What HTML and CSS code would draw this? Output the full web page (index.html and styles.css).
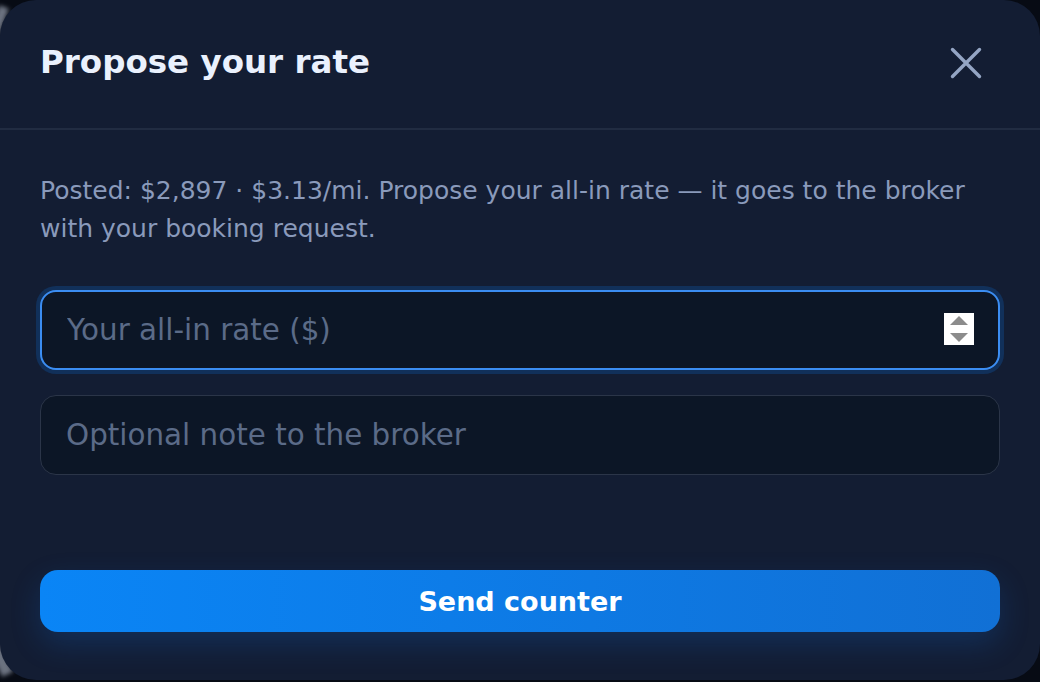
FILE: index.html
```html
<!DOCTYPE html>
<html lang="en">

<head>
    <meta charset="utf-8">
    <meta name="viewport" content="width=device-width, initial-scale=1.0">
    <title>Propose your rate</title>
    <link rel="stylesheet" href="styles.css">
</head>

<body>
    <div class="backdrop">
        <span class="blob blobTop"></span>
        <span class="blob blobBottom"></span>
    </div>

    <section class="modal">
        <header class="modalHead">
            <h2 class="modalTitle">Propose your rate</h2>
            <button class="closeBtn" aria-label="Close">
                <svg viewBox="0 0 32 32" width="32" height="32">
                    <path d="M2.5 2.5 L29.5 29.5 M29.5 2.5 L2.5 29.5" stroke="#94a5c4" stroke-width="3.4" stroke-linecap="round" fill="none" />
                </svg>
            </button>
        </header>

        <div class="modalBody">
            <p class="info">Posted: $2,897 · $3.13/mi. Propose your all-in rate — it goes to the broker with your booking request.</p>

            <form class="counterForm">
                <div class="rateWrap">
                    <input class="field rateField" type="number" placeholder="Your all-in rate ($)" autofocus>
                    <!-- stepper arrows -->
                    <svg class="stepper" viewBox="0 0 30 32" width="30" height="32">
                        <rect width="30" height="32" fill="#ffffff" />
                        <path d="M15 3 L24 12 L6 12 Z" fill="#8c8c8c" />
                        <path d="M6 20 L24 20 L15 29 Z" fill="#8c8c8c" />
                    </svg>
                </div>
                <input class="field" type="text" placeholder="Optional note to the broker">
                <button type="button" class="sendBtn">Send counter</button>
            </form>
        </div>
    </section>
</body>

</html>
```

FILE: styles.css
```css
* {
    box-sizing: border-box;
}

html,
body {
    margin: 0;
    height: 100%;
}

body {
    background-color: #070b14;
    font-family: "DejaVu Sans", "Noto Sans", sans-serif;
    overflow: hidden;
    position: relative;
}

/* the blurred page behind the dialog */
.backdrop {
    position: absolute;
    inset: 0;
}

.blob {
    position: absolute;
    background-color: #6b7280;
    filter: blur(2px);
}

.blobTop {
    left: -6px;
    top: 6px;
    width: 10px;
    height: 30px;
    transform: rotate(20deg);
}

.blobBottom {
    left: -6px;
    top: 640px;
    width: 12px;
    height: 36px;
    transform: rotate(-25deg);
}

.modal {
    position: relative;
    height: 680px;
    background-color: #131d33;
    border-radius: 36px;
    display: flex;
    flex-direction: column;
}

.modalHead {
    height: 130px;
    padding: 0 40px;
    display: flex;
    align-items: center;
    justify-content: space-between;
    border-bottom: 2px solid #212c42;
}

.modalTitle {
    margin: 0;
    font-size: 32.5px;
    font-weight: bold;
    color: #eaf1fd;
    padding-bottom: 4px;
}

.closeBtn {
    background: none;
    border: none;
    padding: 0;
    width: 32px;
    height: 32px;
    margin-right: 18px;
    margin-bottom: 2px;
    cursor: pointer;
}

.modalBody {
    flex: 1;
    padding: 42px 40px 48px;
    display: flex;
    flex-direction: column;
}

.info {
    margin: 0;
    font-size: 25px;
    line-height: 38px;
    color: #8a9abb;
}

.counterForm {
    flex: 1;
    display: flex;
    flex-direction: column;
    gap: 25px;
    margin-top: 42px;
}

.rateWrap {
    position: relative;
}

.field {
    display: block;
    height: 80px;
    width: 100%;
    border: 1px solid #2b3548;
    border-radius: 16px;
    background-color: #0c1626;
    padding: 0 24px 0 25px;
    font-family: "DejaVu Sans", sans-serif;
    font-size: 29.4px;
    color: #dbe4f3;
    outline: none;
}

.field::placeholder {
    color: #5b6b88;
}

.rateField {
    border: 2px solid #3b8df2;
    box-shadow: 0 0 0 4px #11305a;
    appearance: textfield;
}

.rateField::-webkit-inner-spin-button,
.rateField::-webkit-outer-spin-button {
    -webkit-appearance: none;
    margin: 0;
}

.stepper {
    position: absolute;
    right: 26px;
    top: 23px;
}

.sendBtn {
    margin-top: auto;
    height: 62px;
    border: none;
    border-radius: 18px;
    background: linear-gradient(90deg, #0a85f6, #1170d5);
    color: #ffffff;
    font-family: "DejaVu Sans", sans-serif;
    font-size: 27px;
    font-weight: bold;
    box-shadow: 0 12px 30px rgba(16, 110, 220, 0.22);
    cursor: pointer;
}
```
